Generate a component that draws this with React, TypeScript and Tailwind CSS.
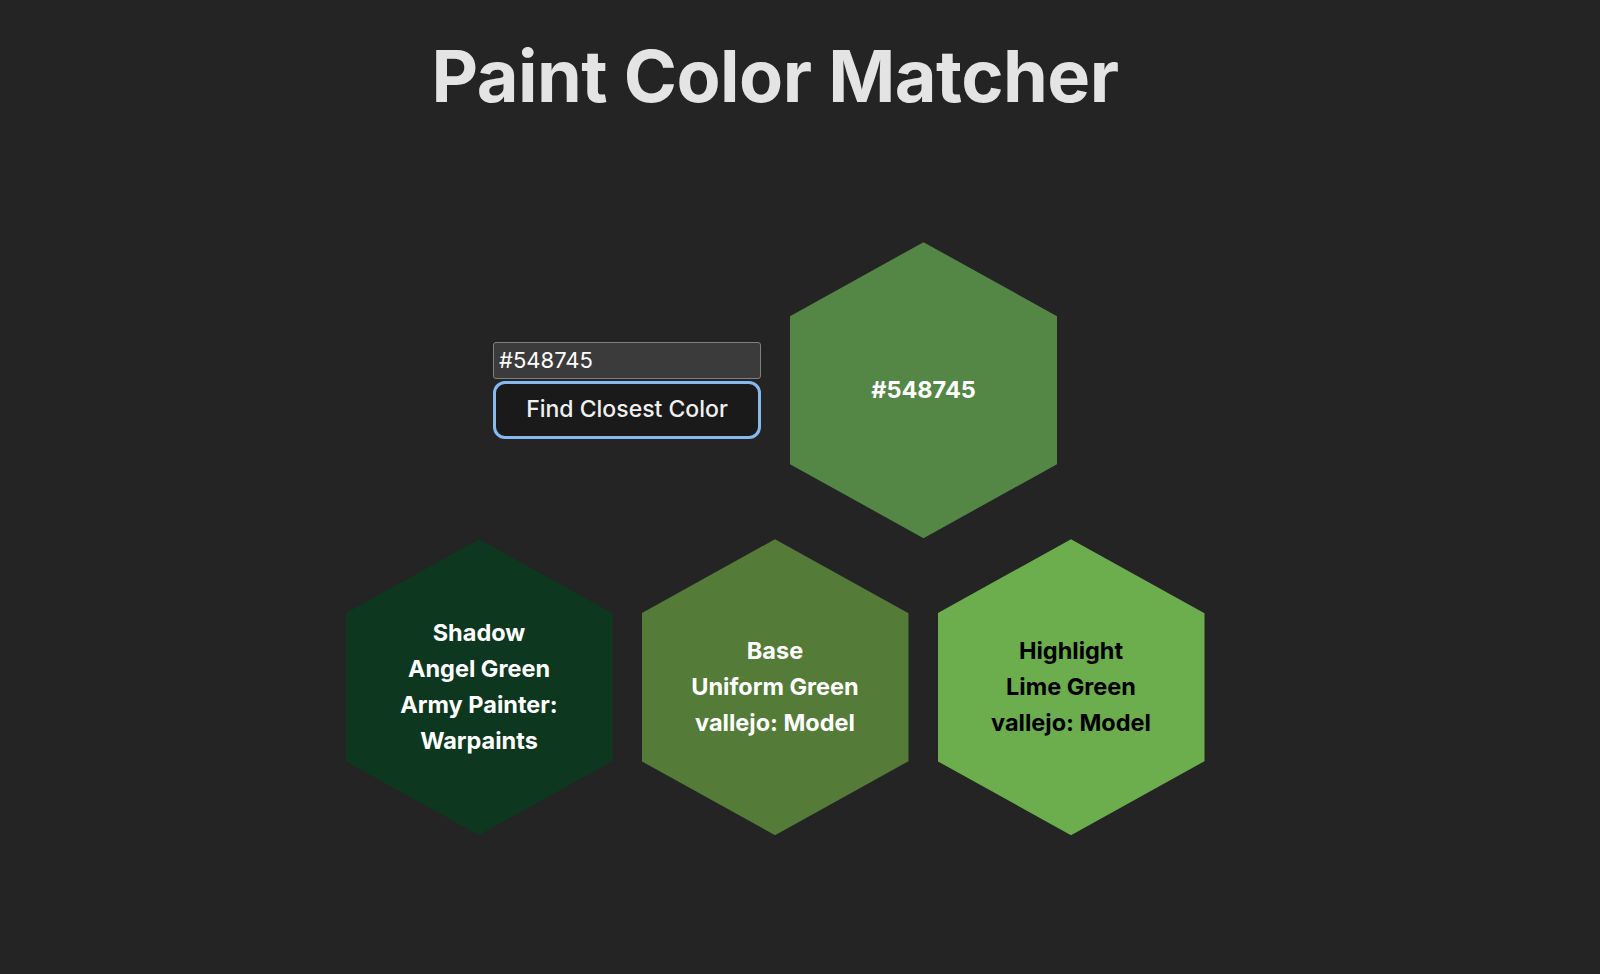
import React, { useState } from "react";

interface Swatch {
    color: string;
    dark: boolean;
    lines: string[];
}

const matches: Swatch[] = [
    { color: "#0d381f", dark: true, lines: ["Shadow", "Angel Green", "Army Painter: Warpaints"] },
    { color: "#547b37", dark: true, lines: ["Base", "Uniform Green", "vallejo: Model"] },
    { color: "#6cad4e", dark: false, lines: ["Highlight", "Lime Green", "vallejo: Model"] },
];

// pointy-top hexagon tile
function Hex({ color, dark, lines }: Swatch) {
    return (
        <div
            className="w-[267px] h-[296px] flex flex-col items-center justify-center px-[30px] text-center text-[23.5px] leading-[36px] font-bold [clip-path:polygon(50%_0,100%_25%,100%_75%,50%_100%,0_75%,0_25%)]"
            style={{ backgroundColor: color, color: dark ? "#ffffff" : "#000000" }}
        >
            {lines.map((line) => (
                <div key={line}>{line}</div>
            ))}
        </div>
    );
}

export default function App() {
    const [hex, setHex] = useState("#548745");

    return (
        <div className="min-h-screen bg-[#242424] font-['Inter',sans-serif]">
            <div className="flex flex-col items-center pr-[50px] pt-[36px]">
                <h1 className="text-[72px] leading-[1.1] font-bold text-[#e4e4e4] tracking-[-0.5px]">
                    Paint Color Matcher
                </h1>

                {/* input + source colour */}
                <div className="mt-[127px] flex items-center gap-[29px]">
                    <div className="flex flex-col w-[268px] gap-[2px]">
                        <input
                            value={hex}
                            onChange={(e) => setHex(e.target.value)}
                            className="h-[37px] w-full bg-[#3b3b3b] border border-[#808080] rounded-[3px] px-[5px] text-[22px] text-white outline-none"
                        />
                        <button className="h-[58px] w-full rounded-[12px] border-[3px] border-[#86b9f0] bg-[#1a1a1a] text-[23px] font-medium text-[#f0f0f0]">
                            Find Closest Color
                        </button>
                    </div>
                    <Hex color="#548745" dark lines={["#548745"]} />
                </div>

                {/* matched paints */}
                <div className="mt-px flex gap-[29px]">
                    {matches.map((m) => (
                        <Hex key={m.lines[0]} {...m} />
                    ))}
                </div>
            </div>
        </div>
    );
}
